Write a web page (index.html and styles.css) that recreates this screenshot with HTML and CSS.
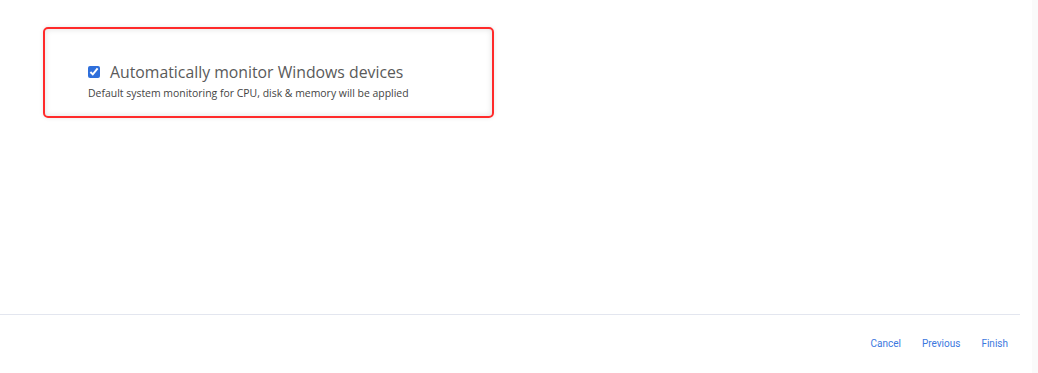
FILE: index.html
```html
<!DOCTYPE html>
<html lang="en">
<head>
  <meta charset="UTF-8">
  <title>Monitoring setup</title>
  <link rel="stylesheet" href="styles.css">
</head>
<body>

<div class="layout">
  <div class="page">
    <div class="content">
      <div class="option-card">
        <label class="option-row">
          <input type="checkbox" class="option-check" checked>
          <span class="option-title">Automatically monitor Windows devices</span>
        </label>
        <div class="option-hint">Default system monitoring for CPU, disk &amp; memory will be applied</div>
      </div>
    </div>
    <div class="footer">
      <a class="footer-link" href="#">Cancel</a>
      <a class="footer-link" href="#">Previous</a>
      <a class="footer-link" href="#">Finish</a>
    </div>
  </div>
  <div class="gutter"></div>
</div>

</body>
</html>
```

FILE: styles.css
```css
html, body {
  margin: 0;
  height: 100%;
}
body {
  font-family: "Open Sans", Roboto, "Liberation Sans", Arial, sans-serif;
  background: #fff;
}
.layout {
  display: flex;
  height: 373px;
}
.page {
  flex: 1;
  padding-right: 12px;
  display: flex;
  flex-direction: column;
}
.gutter {
  width: 6px;
  background: #fafafa;
}
.content {
  height: 314px;
  padding: 27px 0 0 43px;
  box-sizing: border-box;
}
.option-card {
  width: 451px;
  height: 91px;
  box-sizing: border-box;
  border: 2px solid #ff2a2a;
  border-radius: 5px;
  box-shadow: inset 0 0 6px rgba(0, 0, 0, 0.12), 0 0 4px rgba(0, 0, 0, 0.1);
  padding: 33px 0 0 43px;
}
.option-row {
  display: flex;
  align-items: center;
  gap: 10px;
  height: 20px;
}
.option-check {
  width: 12px;
  height: 12px;
  margin: 0;
  accent-color: #2f6fdb;
}
.option-title {
  font-size: 15.8px;
  color: #5a5a5a;
}
.option-hint {
  font-size: 10.45px;
  color: #444;
  margin-top: 4px;
}
.footer {
  border-top: 1px solid #e3e6ef;
  display: flex;
  justify-content: flex-end;
  gap: 21px;
  padding: 23px 12px 0 0;
}
.footer-link {
  font-family: Roboto, "Liberation Sans", Arial, sans-serif;
  font-size: 10px;
  color: #3b78de;
  text-decoration: none;
}
```
